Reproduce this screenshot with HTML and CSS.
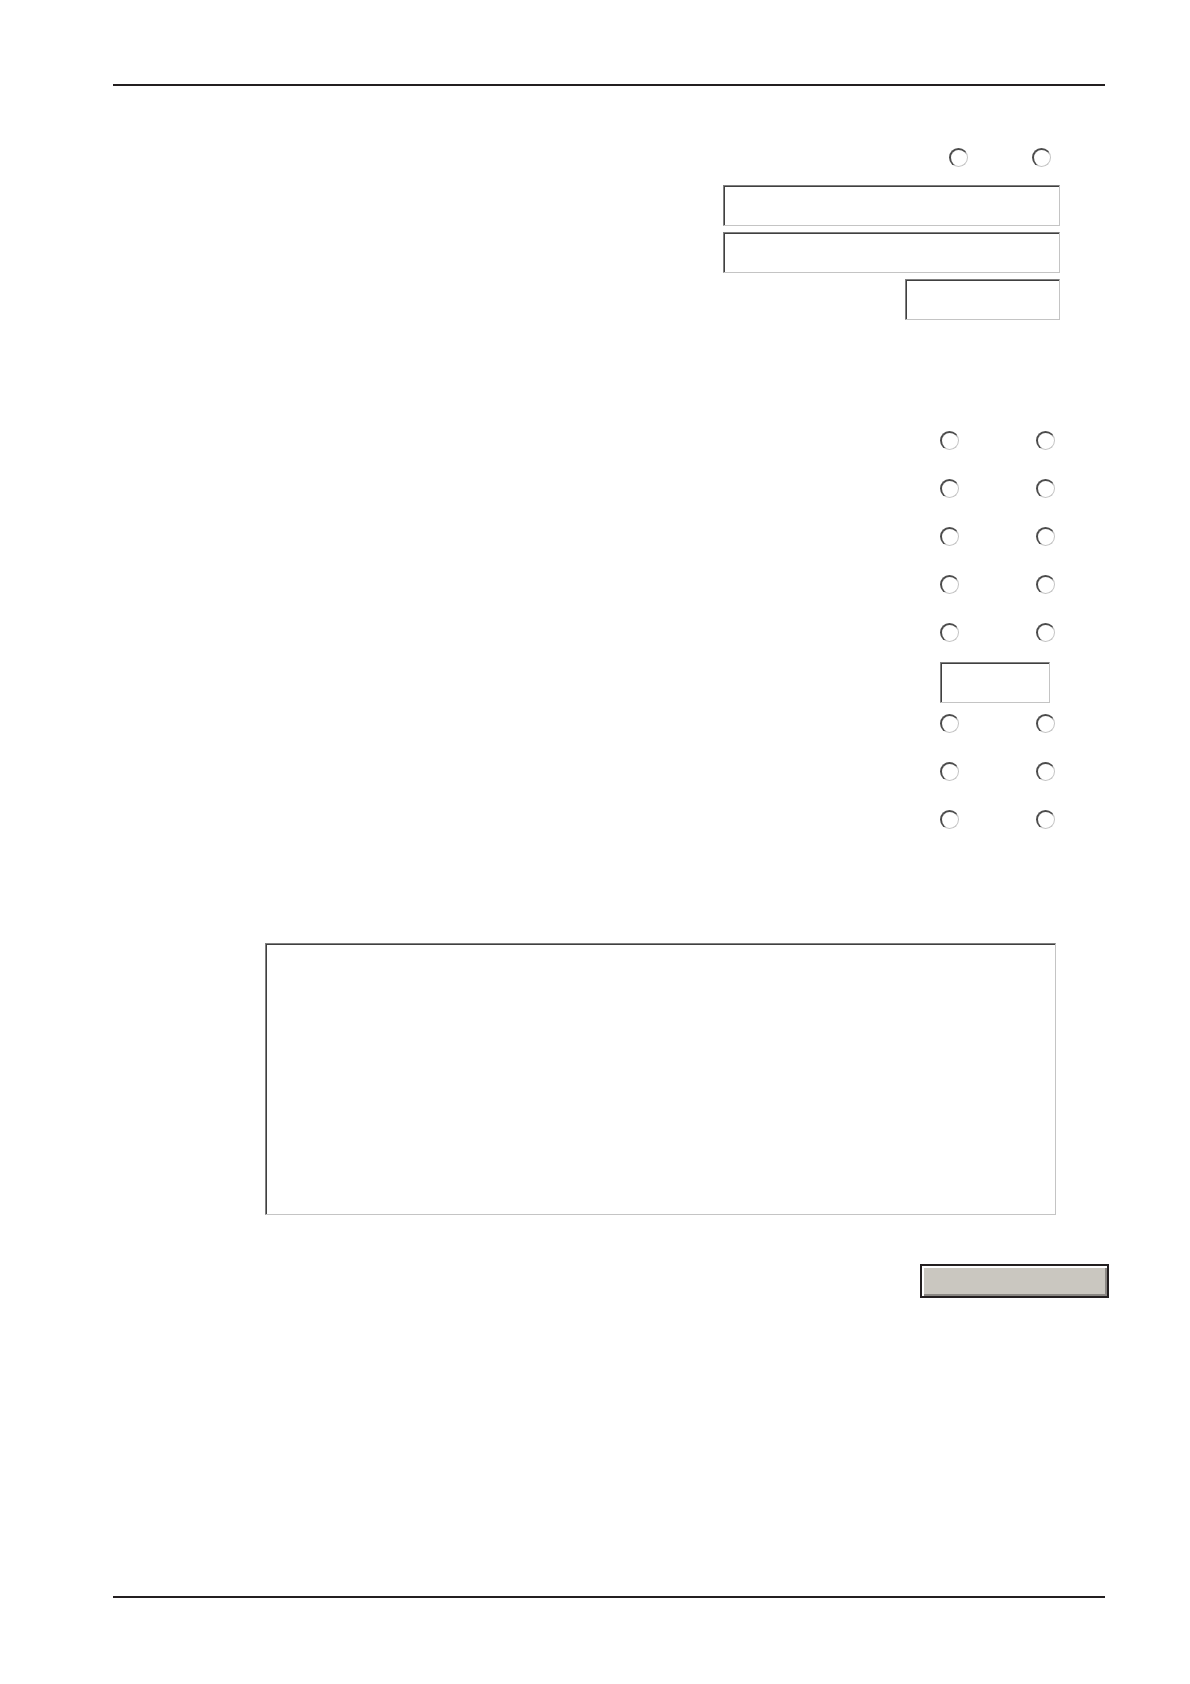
FILE: index.html
```html
<!DOCTYPE html>
<html lang="en">
<head>
    <meta charset="UTF-8">
    <meta name="viewport" content="width=device-width, initial-scale=1.0">
    <title>Form</title>
    <link rel="stylesheet" href="styles.css">
</head>
<body>
    <hr class="rule">

    <form class="form">
        <div class="fields">
            <div class="choice choice-narrow">
                <input type="radio" name="first" value="1" aria-label="First option">
                <input type="radio" name="first" value="2" aria-label="Second option">
            </div>
            <input type="text" class="box box-wide" name="line1" aria-label="Line 1">
            <input type="text" class="box box-wide" name="line2" aria-label="Line 2">
            <input type="text" class="box box-medium" name="line3" aria-label="Line 3">
        </div>

        <div class="choices">
            <div class="choice">
                <input type="radio" name="q1" value="1" aria-label="Question 1, first option">
                <input type="radio" name="q1" value="2" aria-label="Question 1, second option">
            </div>
            <div class="choice">
                <input type="radio" name="q2" value="1" aria-label="Question 2, first option">
                <input type="radio" name="q2" value="2" aria-label="Question 2, second option">
            </div>
            <div class="choice">
                <input type="radio" name="q3" value="1" aria-label="Question 3, first option">
                <input type="radio" name="q3" value="2" aria-label="Question 3, second option">
            </div>
            <div class="choice">
                <input type="radio" name="q4" value="1" aria-label="Question 4, first option">
                <input type="radio" name="q4" value="2" aria-label="Question 4, second option">
            </div>
            <div class="choice">
                <input type="radio" name="q5" value="1" aria-label="Question 5, first option">
                <input type="radio" name="q5" value="2" aria-label="Question 5, second option">
            </div>
        </div>

        <input type="text" class="box box-small" name="amount" aria-label="Amount">

        <div class="choices">
            <div class="choice">
                <input type="radio" name="q6" value="1" aria-label="Question 6, first option">
                <input type="radio" name="q6" value="2" aria-label="Question 6, second option">
            </div>
            <div class="choice">
                <input type="radio" name="q7" value="1" aria-label="Question 7, first option">
                <input type="radio" name="q7" value="2" aria-label="Question 7, second option">
            </div>
            <div class="choice">
                <input type="radio" name="q8" value="1" aria-label="Question 8, first option">
                <input type="radio" name="q8" value="2" aria-label="Question 8, second option">
            </div>
        </div>

        <textarea class="box comments" name="comments" aria-label="Comments"></textarea>

        <button type="button" class="submit" aria-label="Submit"></button>
    </form>

    <hr class="rule rule-bottom">
</body>
</html>
```
FILE: styles.css
```css
* {
    margin: 0;
    padding: 0;
    box-sizing: border-box;
    font-family: "Liberation Sans", Arial, sans-serif;
}

body {
    display: flex;
    flex-direction: column;
    min-height: 100vh;
    padding: 84px 85px 86px 113px;
    background-color: #fff;
}

.rule {
    height: 2px;
    border: none;
    background-color: #231f20;
}

.rule-bottom {
    margin-top: auto;
}

.form {
    display: flex;
    flex-direction: column;
    align-items: flex-end;
    padding: 62px 0;
}

.fields {
    display: flex;
    flex-direction: column;
    align-items: flex-end;
    gap: 6px;
    margin-right: 45px;
    margin-bottom: 111px;
}

.choices {
    display: flex;
    flex-direction: column;
    gap: 29px;
    margin-right: 50px;
}

.choice {
    display: flex;
    gap: 77px;
}

.choice-narrow {
    gap: 64px;
    margin-right: 9px;
    margin-bottom: 12px;
}

/* Sunken controls: dark top and left, light bottom and right */
input[type="radio"] {
    appearance: none;
    width: 19px;
    height: 19px;
    border: 1px solid;
    border-color: #4c4c4c #c4c4c4 #c4c4c4 #4c4c4c;
    border-top-width: 2px;
    border-left-width: 2px;
    border-radius: 50%;
}

.box {
    height: 41px;
    padding: 4px 8px;
    border: 1px solid;
    border-color: #808080 #c4c4c4 #c4c4c4 #808080;
    box-shadow: inset 1px 1px #404040;
    background-color: #fff;
    font-size: 16px;
}

.box-wide {
    width: 337px;
}

.box-medium {
    width: 155px;
}

.box-small {
    width: 110px;
    margin: 20px 55px 11px 0;
}

.comments {
    align-self: stretch;
    height: 272px;
    margin: 114px 49px 49px 152px;
    resize: none;
}

.submit {
    width: 189px;
    height: 34px;
    margin-right: -4px;
    border: 2px solid #231f20;
    background-color: #cac7c0;
    box-shadow: inset 2px 2px #fff, inset -2px -2px #8a8783;
}
```
